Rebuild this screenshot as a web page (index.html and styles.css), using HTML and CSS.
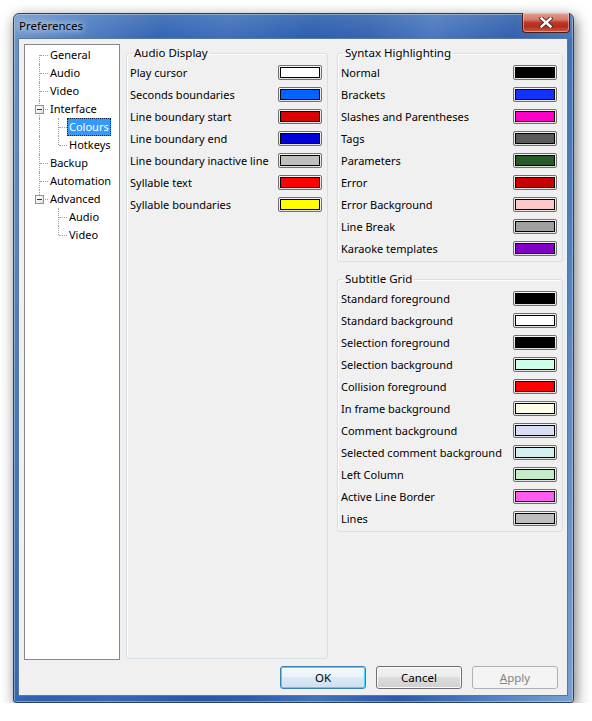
FILE: index.html
```html
<!DOCTYPE html>
<html>
<head>
<meta charset="utf-8">
<title>Preferences</title>
<link rel="stylesheet" href="styles.css">
</head>
<body>
<div class="window">
  <div class="titlebar">
    <span class="title">Preferences</span>
    <div class="close">
      <svg width="14" height="11" viewBox="0 0 14 11">
        <path d="M2.5 1.5 L11.5 9.5 M11.5 1.5 L2.5 9.5" stroke="#3a2a2a" stroke-width="4.2" stroke-linecap="square" fill="none"/>
        <path d="M2.5 1.5 L11.5 9.5 M11.5 1.5 L2.5 9.5" stroke="#ffffff" stroke-width="2.4" stroke-linecap="square" fill="none"/>
      </svg>
    </div>
  </div>
  <div class="client">
    <div class="main">
      <div class="tree">
        <div class="node"><span class="g first h"></span><span class="lbl">General</span></div>
        <div class="node"><span class="g tee h"></span><span class="lbl">Audio</span></div>
        <div class="node"><span class="g tee h"></span><span class="lbl">Video</span></div>
        <div class="node"><span class="g tee h"><span class="exp"></span></span><span class="lbl">Interface</span></div>
        <div class="node"><span class="g thru"></span><span class="g tee h"></span><span class="lbl sel">Colours</span></div>
        <div class="node"><span class="g thru"></span><span class="g last h"></span><span class="lbl">Hotkeys</span></div>
        <div class="node"><span class="g tee h"></span><span class="lbl">Backup</span></div>
        <div class="node"><span class="g tee h"></span><span class="lbl">Automation</span></div>
        <div class="node"><span class="g last h"><span class="exp"></span></span><span class="lbl">Advanced</span></div>
        <div class="node"><span class="g"></span><span class="g tee h"></span><span class="lbl">Audio</span></div>
        <div class="node"><span class="g"></span><span class="g last h"></span><span class="lbl">Video</span></div>
      </div>

      <fieldset class="group audio">
        <legend>Audio Display</legend>
        <div class="row"><span>Play cursor</span><span class="sw"><i style="background:#ffffff"></i></span></div>
        <div class="row"><span>Seconds boundaries</span><span class="sw"><i style="background:#0064ff"></i></span></div>
        <div class="row"><span>Line boundary start</span><span class="sw"><i style="background:#d80000"></i></span></div>
        <div class="row"><span>Line boundary end</span><span class="sw"><i style="background:#0000d8"></i></span></div>
        <div class="row"><span>Line boundary inactive line</span><span class="sw"><i style="background:#bebebe"></i></span></div>
        <div class="row"><span>Syllable text</span><span class="sw"><i style="background:#ff0000"></i></span></div>
        <div class="row"><span>Syllable boundaries</span><span class="sw"><i style="background:#ffff00"></i></span></div>
      </fieldset>

      <div class="rightcol">
        <fieldset class="group">
          <legend>Syntax Highlighting</legend>
          <div class="row"><span>Normal</span><span class="sw"><i style="background:#000000"></i></span></div>
          <div class="row"><span>Brackets</span><span class="sw"><i style="background:#1432ff"></i></span></div>
          <div class="row"><span>Slashes and Parentheses</span><span class="sw"><i style="background:#ff00c8"></i></span></div>
          <div class="row"><span>Tags</span><span class="sw"><i style="background:#5a5a5a"></i></span></div>
          <div class="row"><span>Parameters</span><span class="sw"><i style="background:#285a28"></i></span></div>
          <div class="row"><span>Error</span><span class="sw"><i style="background:#c80000"></i></span></div>
          <div class="row"><span>Error Background</span><span class="sw"><i style="background:#ffc8c8"></i></span></div>
          <div class="row"><span>Line Break</span><span class="sw"><i style="background:#a0a0a0"></i></span></div>
          <div class="row"><span>Karaoke templates</span><span class="sw"><i style="background:#8200c8"></i></span></div>
        </fieldset>
        <fieldset class="group">
          <legend>Subtitle Grid</legend>
          <div class="row"><span>Standard foreground</span><span class="sw"><i style="background:#000000"></i></span></div>
          <div class="row"><span>Standard background</span><span class="sw"><i style="background:#ffffff"></i></span></div>
          <div class="row"><span>Selection foreground</span><span class="sw"><i style="background:#000000"></i></span></div>
          <div class="row"><span>Selection background</span><span class="sw"><i style="background:#ceffe7"></i></span></div>
          <div class="row"><span>Collision foreground</span><span class="sw"><i style="background:#ff0000"></i></span></div>
          <div class="row"><span>In frame background</span><span class="sw"><i style="background:#fffdea"></i></span></div>
          <div class="row"><span>Comment background</span><span class="sw"><i style="background:#d8def5"></i></span></div>
          <div class="row"><span>Selected comment background</span><span class="sw"><i style="background:#d3eeee"></i></span></div>
          <div class="row"><span>Left Column</span><span class="sw"><i style="background:#c4ecc9"></i></span></div>
          <div class="row"><span>Active Line Border</span><span class="sw"><i style="background:#ff5bef"></i></span></div>
          <div class="row"><span>Lines</span><span class="sw"><i style="background:#bebebe"></i></span></div>
        </fieldset>
      </div>
    </div>
    <div class="buttons">
      <button class="btn default">OK</button>
      <button class="btn">Cancel</button>
      <button class="btn disabled"><u>A</u>pply</button>
    </div>
  </div>
</div>
</body>
</html>
```
FILE: styles.css
```css
html, body {
  margin: 0;
  padding: 0;
  background: #ffffff;
}

body {
  font-family: "Noto Sans", "Open Sans", sans-serif;
  font-size: 11px;
  color: #000;
}

.window {
  box-sizing: border-box;
  margin: 13px 0 0 13px;
  width: 561px;
  height: 690px;
  border: 1px solid #2b3f5e;
  border-radius: 6px 6px 3px 3px;
  background:
    linear-gradient(180deg, rgba(255,255,255,0.15) 0px, rgba(255,255,255,0.04) 24px, rgba(0,0,0,0) 25px),
    linear-gradient(100deg, #6a94ca 0%, #4a7bbf 10%, #2c5fb0 22%, #3769b8 32%, #2558a9 44%, #2c5dad 52%, #4272bb 62%, #2a5aa9 74%, #5082c2 88%, #789fd3 100%);
  box-shadow: 2px 4px 14px rgba(0,0,0,0.55), inset 0 0 0 1px rgba(255,255,255,0.35);
  padding: 0 5px 6px 4px;
  display: flex;
  flex-direction: column;
}

.titlebar {
  height: 24px;
  display: flex;
  justify-content: space-between;
  align-items: flex-start;
}

.title {
  padding: 5px 0 0 1px;
  font-size: 11.5px;
  line-height: 14px;
  color: #000;
  text-shadow: 0 0 6px rgba(255,255,255,0.9), 0 0 10px rgba(255,255,255,0.7);
}

.close {
  margin-top: -1px;
  margin-right: -2px;
  width: 48px;
  height: 20px;
  box-sizing: border-box;
  border: 1px solid #4a1f1a;
  border-top: none;
  border-radius: 0 0 4px 4px;
  background: linear-gradient(180deg, #e3a092 0%, #d47a6a 35%, #be3a26 50%, #b22d1e 70%, #cc5a42 100%);
  box-shadow: inset 0 0 0 1px rgba(255,220,210,0.45);
  display: flex;
  align-items: center;
  justify-content: center;
}

.close svg {
  display: block;
}

.client {
  box-sizing: border-box;
  width: 550px;
  height: 658px;
  border: 1px solid #5c789e;
  background: #f0f0f0;
  padding: 5px 4px 6px 5px;
  display: flex;
  flex-direction: column;
}

.main {
  height: 616px;
  display: flex;
  align-items: stretch;
}

/* Tree */
.tree {
  box-sizing: border-box;
  width: 96px;
  border: 1px solid #828790;
  background: #fff;
  padding: 1px 0 0 4px;
}

.node {
  height: 18px;
  display: flex;
  align-items: stretch;
}

.g {
  position: relative;
  width: 19px;
  flex: none;
}

.g.tee::before,
.g.thru::before,
.g.first::before,
.g.last::before {
  content: "";
  position: absolute;
  left: 10px;
  width: 0;
  border-left: 1px dotted #a0a0a0;
}

.g.tee::before,
.g.thru::before { top: 0; bottom: 0; }
.g.first::before { top: 9px; bottom: 0; }
.g.last::before { top: 0; height: 9px; }

.g.h::after {
  content: "";
  position: absolute;
  left: 11px;
  top: 9px;
  width: 8px;
  border-top: 1px dotted #a0a0a0;
}

.exp {
  position: absolute;
  left: 6px;
  top: 5px;
  width: 9px;
  height: 9px;
  box-sizing: border-box;
  border: 1px solid #919191;
  background: linear-gradient(135deg, #ffffff 0%, #f0f0f0 60%, #dcdcdc 100%);
  z-index: 1;
}

.exp::after {
  content: "";
  position: absolute;
  left: 1px;
  top: 3px;
  width: 5px;
  height: 1px;
  background: #1e3a5a;
}

.lbl {
  padding: 0 2px;
  line-height: 18px;
  white-space: nowrap;
  color: #000;
}

.lbl.sel {
  background: #3399ff;
  color: #fff;
  box-sizing: border-box;
  outline: 1px dotted #102040;
  outline-offset: -1px;
}

/* Group boxes */
.group {
  box-sizing: border-box;
  margin: 0;
  padding: 0 5px 2px 3px;
  border: 1px solid #d5dfe5;
  border-radius: 3px;
  min-width: 0;
  box-shadow: inset 1px 1px 0 #ffffff;
}

.group legend {
  padding: 0 2px;
  margin-left: 2px;
  line-height: 16px;
  font-size: 11.5px;
}

.audio {
  width: 202px;
  margin: 1px 0 1px 6px;
}

.rightcol {
  width: 226px;
  margin-left: 9px;
  padding-top: 1px;
  display: flex;
  flex-direction: column;
  gap: 9px;
}

.rightcol .group {
  width: 226px;
}

.row {
  height: 22px;
  display: flex;
  align-items: center;
  justify-content: space-between;
  white-space: nowrap;
}

.sw {
  box-sizing: border-box;
  width: 44px;
  height: 15px;
  border: 1px solid #707070;
  border-radius: 2px;
  padding: 1px;
  background: linear-gradient(#f6f6f6, #e2e2e2);
  display: flex;
  flex: none;
}

.sw i {
  flex: 1;
  border: 1px solid #000;
}

/* Buttons */
.buttons {
  margin-top: 6px;
  height: 23px;
  display: flex;
  justify-content: flex-end;
  gap: 10px;
  padding-right: 5px;
}

.btn {
  box-sizing: border-box;
  width: 86px;
  height: 23px;
  margin: 0;
  padding: 0;
  font-family: "Noto Sans", "Open Sans", sans-serif;
  font-size: 11.5px;
  color: #000;
  border: 1px solid #707070;
  border-radius: 3px;
  background: linear-gradient(180deg, #f2f2f2 0%, #ebebeb 49%, #dddddd 50%, #cfcfcf 100%);
  box-shadow: inset 0 0 0 1px #fbfbfb;
}

.btn.default {
  border-color: #3c7fb1;
  background: linear-gradient(180deg, #f4f9fd 0%, #eaf3fb 49%, #dbe9f5 50%, #cde0f0 100%);
  box-shadow: inset 0 0 0 1px #48d4fb;
}

.btn.disabled {
  border-color: #adb2b5;
  background: #f4f4f4;
  color: #838383;
  box-shadow: none;
}

.btn u {
  text-decoration: underline;
}
```
